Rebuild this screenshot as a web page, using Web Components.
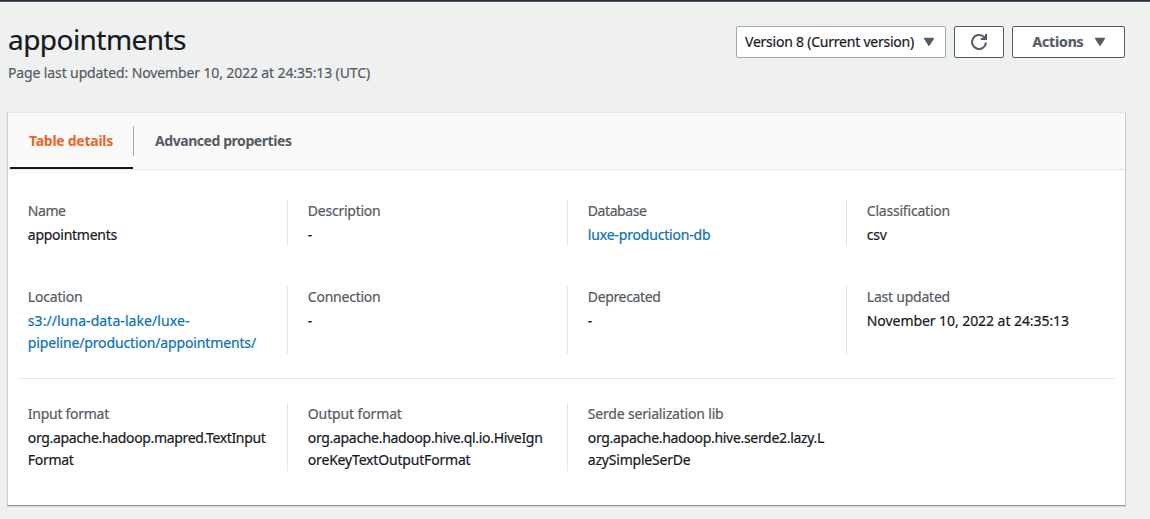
<!DOCTYPE html>
<html lang="en">
<head>
<meta charset="utf-8">
<title>appointments</title>
<style>
html, body { margin: 0; height: 100%; overflow: hidden; }
body { background: #eff1f1; font: 14px/22px "Noto Sans", "Open Sans", sans-serif; color: #16191f; -webkit-text-stroke: 0.2px currentColor; }
</style>
</head>
<body>
<table-page></table-page>
<script>
const define = (name, html, ready) => {
  const t = document.createElement('template');
  t.innerHTML = html;
  customElements.define(name, class extends HTMLElement {
    constructor() {
      super();
      this.attachShadow({ mode: 'open' }).append(t.content.cloneNode(true));
    }
    connectedCallback() { if (ready) ready(this); }
  });
};

/* One line of text, tracked so that its advance equals the "w" attribute. */
define('tracked-text', `<style>:host{display:block;white-space:nowrap;font-kerning:normal}span{display:inline-block}</style><span><slot></slot></span>`, el => {
  const span = el.shadowRoot.querySelector('span');
  span.style.letterSpacing = '0.0001px';
  const natural = span.getBoundingClientRect().width;
  span.style.letterSpacing = ((+el.getAttribute('w') - natural) / el.textContent.length) + 'px';
});

define('caret-down', `<style>:host{display:block;width:12px;height:10px}svg{display:block}</style>
<svg width="12" height="10" viewBox="0 0 12 10"><path d="M1.8 1.5H10.2L6 8.2Z" fill="#545b64" stroke="#545b64" stroke-width="1.6" stroke-linejoin="round"/></svg>`);

define('refresh-icon', `<style>:host{display:block;width:18px;height:18px}svg{display:block}</style>
<svg width="18" height="18" viewBox="0 0 18 18" fill="none" stroke="#545b64" stroke-width="2"><path d="M16 9.4A7 7 0 1 1 13.6 3.7L15.4 5.4"/><path d="M16 1V6.1H10.8"/><path d="M13.6 3.7L16 2V6H13Z" fill="#545b64" stroke="none"/></svg>`);

define('ui-button', `<style>
:host{display:flex;box-sizing:border-box;height:32px;align-items:center;justify-content:center;background:#fff;border:1px solid #545b64;border-radius:2px;color:#545b64;font-weight:700}
:host([kind=select]){border-color:#9baaaa;color:#16191f;font-weight:400}
</style><slot></slot>`);

define('page-header', `<style>
:host{display:flex;justify-content:space-between;align-items:flex-start;padding:20px 25px 0 8px;height:90px;box-sizing:content-box}
h1{margin:0 0 6px;font-size:28px;line-height:34px;font-weight:400}
.sub{color:#545b64}
.actions{display:flex;gap:8px;padding-top:4px}
.v{width:210px;gap:9px;padding-right:2px}.r{width:50px}.a{width:113px;gap:10px;padding-left:1px}
</style>
<div><h1><tracked-text w="178">appointments</tracked-text></h1>
<tracked-text class="sub" w="362">Page last updated: November 10, 2022 at 24:35:13 (UTC)</tracked-text></div>
<div class="actions">
<ui-button class="v" kind="select"><tracked-text w="169">Version 8 (Current version)</tracked-text><caret-down></caret-down></ui-button>
<ui-button class="r"><refresh-icon></refresh-icon></ui-button>
<ui-button class="a"><tracked-text w="51">Actions</tracked-text><caret-down></caret-down></ui-button>
</div>`);

define('tab-strip', `<style>
:host{display:flex;height:56px;background:#fafafa;border-bottom:1px solid #e5e9e9;font-weight:700;color:#545b64;padding-left:2px;-webkit-text-stroke-width:0}
.tab{box-sizing:border-box;padding:17px 20px 0 19px;height:56px}
.on{width:123px;color:#ec6524;border-bottom:2px solid #16191f}
.bar{width:1px;height:30px;margin-top:13px;background:#a4adad}
.next{padding-left:21px}
</style>
<div class="tab on"><tracked-text w="84">Table details</tracked-text></div><div class="bar"></div>
<div class="tab next"><tracked-text w="136.5">Advanced properties</tracked-text></div>`);

define('detail-row', `<style>:host{display:grid;grid-template-columns:279px 280px 279px 279px}</style><slot></slot>`);

define('detail-field', `<style>
:host{display:block;border-left:1px solid #e4e8e8;padding-left:19.8px}
:host([first]){border-left-color:transparent;padding-left:18.8px}
.label{color:#545b64;margin-bottom:2px}
:host([link]) .value{color:#0a70b5}
</style><div class="label"><slot name="label"></slot></div><div class="value"><slot></slot></div>`);

define('details-panel', `<style>
:host{display:block;margin:0 24px 0 7px;border:1px solid #cbd0d0;border-top-color:#e4e8e8;border-bottom-color:#909799;background:#fff;height:392px;box-shadow:0 1px 1px #d5dada}
.body{padding-top:30px}
hr{border:0;height:1px;background:#e6eaea;margin:24px 10px}
</style>
<tab-strip></tab-strip><div class="body"><slot></slot><hr><slot name="formats"></slot></div>`);

const field = (label, lw, lines, attrs = '') =>
  `<detail-field ${attrs}><tracked-text slot="label" w="${lw - 0.8}">${label}</tracked-text>` +
  lines.map(([t, w]) => `<tracked-text w="${w - 0.8}">${t}</tracked-text>`).join('') + `</detail-field>`;

define('table-page', `<style>
:host{display:block}
.top{height:2px;box-sizing:border-box;background:#232f3e;border-bottom:1px solid #4e5966}
.second{margin-top:40px}
</style>
<div class="top"></div>
<page-header></page-header>
<details-panel>
<detail-row>${
  field('Name', 38.5, [['appointments', 90]], 'first') +
  field('Description', 73.5, [['-', 6]]) +
  field('Database', 59.5, [['luxe-production-db', 123.5]], 'link') +
  field('Classification', 84, [['csv', 20.5]])}</detail-row>
<detail-row class="second">${
  field('Location', 55.5, [['s3://luna-data-lake/luxe-', 162.5], ['pipeline/production/appointments/', 229]], 'first link') +
  field('Connection', 73.5, [['-', 6]]) +
  field('Deprecated', 73.5, [['-', 6]]) +
  field('Last updated', 84, [['November 10, 2022 at 24:35:13', 203]])}</detail-row>
<detail-row slot="formats">${
  field('Input format', 82, [['org.apache.hadoop.mapred.TextInput', 238.5], ['Format', 46.5]], 'first') +
  field('Output format', 94.8, [['org.apache.hadoop.hive.ql.io.HiveIgn', 235.5], ['oreKeyTextOutputFormat', 163.5]]) +
  field('Serde serialization lib', 136.5, [['org.apache.hadoop.hive.serde2.lazy.L', 237], ['azySimpleSerDe', 103.5]])}</detail-row>
</details-panel>`);
</script>
</body>
</html>
